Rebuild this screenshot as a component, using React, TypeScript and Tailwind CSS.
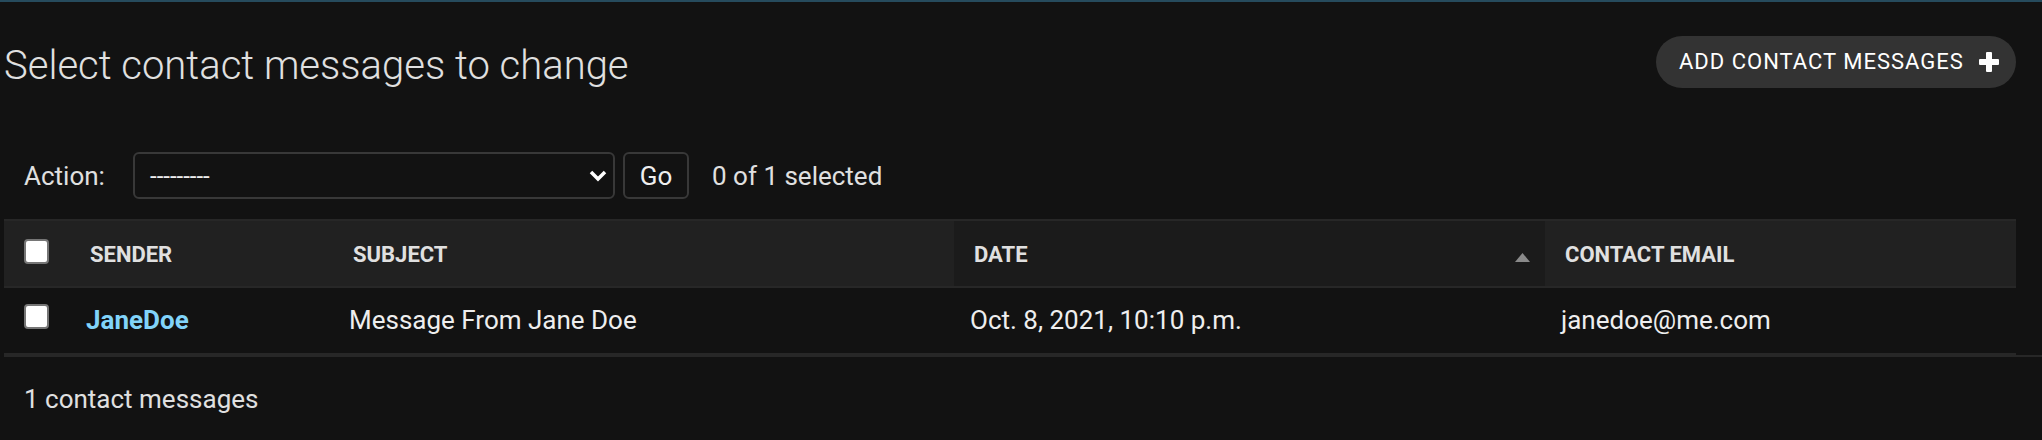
import React from "react"

const columns = [
  { key: "sender", label: "Sender", width: 263 },
  { key: "subject", label: "Subject", width: 621 },
  { key: "date", label: "Date", width: 591, sorted: true },
  { key: "email", label: "Contact email", width: 471 },
]

const rows = [
  {
    sender: "JaneDoe",
    subject: "Message From Jane Doe",
    date: "Oct. 8, 2021, 10:10 p.m.",
    email: "janedoe@me.com",
  },
]

function Checkbox({ className = "" }: { className?: string }) {
  return (
    <span
      className={`block w-[25px] h-[25px] rounded-[4px] bg-white border-2 border-[#767676] ${className}`}
    />
  )
}

function PlusIcon() {
  return (
    <svg width="20" height="20" viewBox="0 0 20 20" className="shrink-0">
      <rect x="7" y="0" width="6" height="20" rx="1" fill="#ffffff" />
      <rect x="0" y="7" width="20" height="6" rx="1" fill="#ffffff" />
    </svg>
  )
}

function Chevron() {
  return (
    <svg width="18" height="12" viewBox="0 0 18 12" className="shrink-0">
      <polyline
        points="2,2 9,9 16,2"
        fill="none"
        stroke="#ffffff"
        strokeWidth="3.5"
        strokeLinejoin="miter"
      />
    </svg>
  )
}

function SortArrow() {
  return (
    <svg width="15" height="9" viewBox="0 0 15 9" className="shrink-0 mt-[5px]">
      <polygon points="7.5,0 15,9 0,9" fill="#8a8a8a" />
    </svg>
  )
}

export default function App() {
  return (
    <div className="min-h-[440px] bg-[#121212] text-[#eeeeee] [font-family:Roboto,sans-serif]">
      {/* breadcrumbs edge */}
      <div className="h-[2px] bg-[#264b5d]" />

      <div className="pl-[4px]">
        {/* Title + object tools */}
        <div className="flex items-start justify-between pr-[26px]">
          <h1 className="mt-[40px] text-[40px] leading-[48px] font-light text-[#e0e0e0]">
            Select contact messages to change
          </h1>
          <a className="mt-[34px] flex items-center justify-between w-[360px] h-[52px] pl-[23px] pr-[17px] rounded-full bg-[#333333] text-white text-[22px] leading-none uppercase tracking-[1px]">
            <span>Add contact messages</span>
            <PlusIcon />
          </a>
        </div>

        {/* Actions */}
        <div className="mt-[62px] flex items-center h-[47px] pl-[20px] text-[26px] leading-none text-[#e0e0e0]">
          <span className="w-[109px]">Action:</span>
          <div className="flex items-center justify-between w-[482px] h-[47px] pl-[15px] pr-[6px] border-2 border-[#383838] rounded-[6px] text-[#eeeeee]">
            <span className="text-[24px]">---------</span>
            <Chevron />
          </div>
          <div className="ml-[8px] flex items-center justify-center w-[66px] h-[47px] border-2 border-[#383838] rounded-[6px] text-[#eeeeee]">
            Go
          </div>
          <span className="ml-[23px]">0 of 1 selected</span>
        </div>

        {/* Results table */}
        <table className="mt-[20px] w-[2012px] table-fixed border-collapse">
          <colgroup>
            <col className="w-[66px]" />
            {columns.map((c) => (
              <col key={c.key} style={{ width: c.width }} />
            ))}
          </colgroup>
          <thead>
            <tr>
              <th className="p-0 bg-[#212121] border-t-2 border-b-2 border-[#272727]">
                <div className="flex items-center h-[65px] pl-[20px]">
                  <Checkbox className="mb-[5px]" />
                </div>
              </th>
              {columns.map((c) => (
                <th
                  key={c.key}
                  className={`p-0 text-left border-t-2 border-b-2 border-[#272727] ${
                    c.sorted ? "bg-[#1b1b1b]" : "bg-[#212121]"
                  }`}
                >
                  <div className="flex items-center justify-between h-[65px] pt-[2px] pl-[20px] pr-[15px] text-[22px] leading-none font-bold uppercase text-[#e0e0e0]">
                    <span>{c.label}</span>
                    {c.sorted && <SortArrow />}
                  </div>
                </th>
              ))}
            </tr>
          </thead>
          <tbody>
            {rows.map((r) => (
              <tr key={r.sender}>
                <td className="p-0 border-b-2 border-[#272727]">
                  <div className="flex items-center h-[65px] pl-[20px]">
                    <Checkbox className="mb-[8px]" />
                  </div>
                </td>
                <td className="p-0 border-b-2 border-[#272727]">
                  <div className="flex items-center h-[65px] pb-[2px] pl-[16px] text-[26px] leading-none font-bold text-[#81d4fa]">
                    {r.sender}
                  </div>
                </td>
                <td className="p-0 border-b-2 border-[#272727]">
                  <div className="flex items-center h-[65px] pb-[2px] pl-[16px] text-[26px] leading-none">
                    {r.subject}
                  </div>
                </td>
                <td className="p-0 border-b-2 border-[#272727]">
                  <div className="flex items-center h-[65px] pb-[2px] pl-[16px] text-[26px] leading-none">
                    {r.date}
                  </div>
                </td>
                <td className="p-0 border-b-2 border-[#272727]">
                  <div className="flex items-center h-[65px] pb-[2px] pl-[16px] text-[26px] leading-none">
                    {r.email}
                  </div>
                </td>
              </tr>
            ))}
          </tbody>
        </table>

        {/* Paginator */}
        <p className="border-t-2 border-[#272727] pt-[20px] pl-[20px] text-[26px] leading-[44px] text-[#e0e0e0]">
          1 contact messages
        </p>
      </div>
    </div>
  )
}
